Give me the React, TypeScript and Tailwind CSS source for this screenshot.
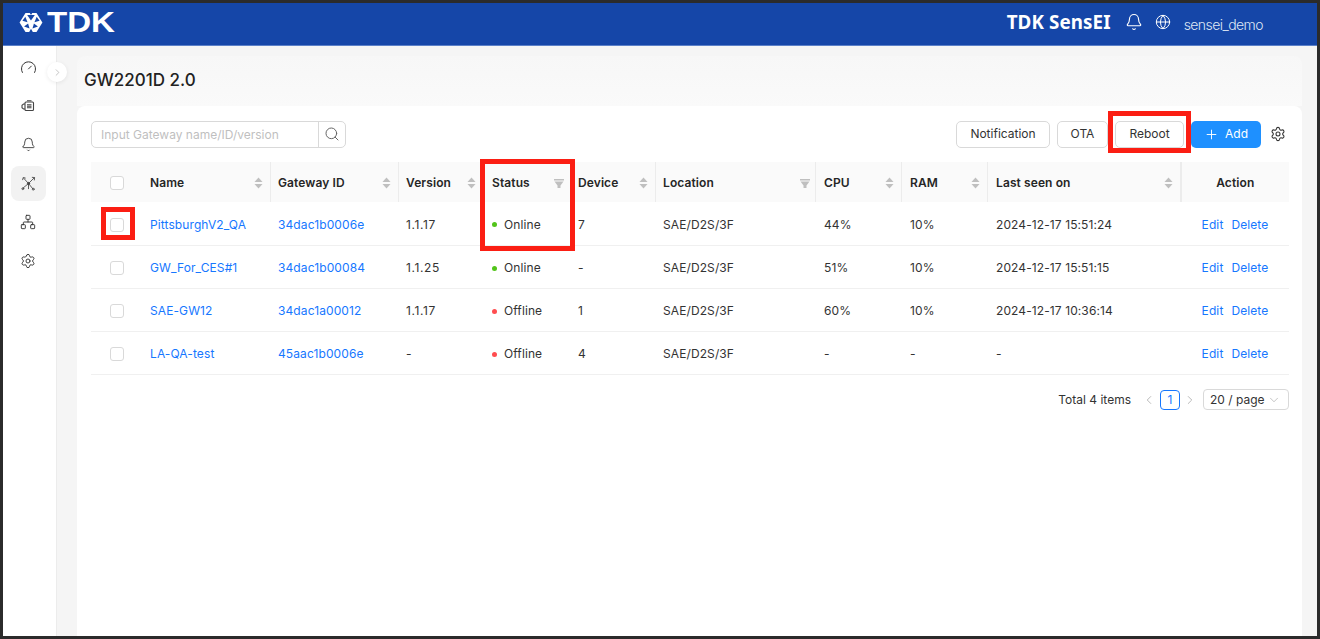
import React from "react";
import { Gauge, Bell, Globe, Settings, Network, Search, ChevronRight, ChevronLeft, ChevronDown, Plus } from "lucide-react";

const font = "font-['Inter','Noto_Sans',sans-serif]";

type Row = { name: string; id: string; ver: string; online: boolean; dev: string; cpu: string; ram: string; seen: string };
const rows: Row[] = [
  { name: "PittsburghV2_QA", id: "34dac1b0006e", ver: "1.1.17", online: true, dev: "7", cpu: "44%", ram: "10%", seen: "2024-12-17 15:51:24" },
  { name: "GW_For_CES#1", id: "34dac1b00084", ver: "1.1.25", online: true, dev: "-", cpu: "51%", ram: "10%", seen: "2024-12-17 15:51:15" },
  { name: "SAE-GW12", id: "34dac1a00012", ver: "1.1.17", online: false, dev: "1", cpu: "60%", ram: "10%", seen: "2024-12-17 10:36:14" },
  { name: "LA-QA-test", id: "45aac1b0006e", ver: "-", online: false, dev: "4", cpu: "-", ram: "-", seen: "-" },
];

function Logo() {
  return (
    <svg width="24" height="21" viewBox="0 0 26 23" className="shrink-0">
      <path d="M7 1h12l6.5 10.5L19 22H7L.5 11.5z" fill="#fff" />
      <g fill="#1546a8">
        <path d="M11.6 1h2.8L13 3.4z" />
        <path d="M8.8 3.2h8.4L13 9.2z" />
        <path d="M3.6 9.6l3.2-4.4 2.4 6z" />
        <path d="M22.4 9.6l-3.2-4.4-2.4 6z" />
        <path d="M5.4 15.8l4.4-3.2 1.6 5.4z" />
        <path d="M20.6 15.8l-4.4-3.2-1.6 5.4z" />
        <path d="M13 18.4l-2 3.6h4z" />
      </g>
    </svg>
  );
}

function EngineIcon() {
  return (
    <svg width="14" height="14" viewBox="0 0 14 14" fill="none" stroke="#444" strokeWidth="1.1">
      <rect x="4" y="3" width="8.5" height="8.5" rx="1" />
      <path d="M6 1.8h4.5M4 5H2.5L1 6.2v2.6L2.5 10H4M6 5.8h4.5M6 7.3h4.5M6 8.8h4.5" />
    </svg>
  );
}

function NodesIcon() {
  return (
    <svg width="17" height="17" viewBox="0 0 18 18" fill="none" stroke="#444" strokeWidth="0.9" strokeLinecap="round">
      <path d="M9 9L4 3.5M9 9l6-6M9 9l-6 5M9 9l4.5 5.5M9 9v5.5" />
      <path d="M13 2.5l2.5.2-.3 2.6M2.8 5l.6-2.4 2.2.6" />
      <circle cx="9" cy="9" r="1.2" fill="#444" />
      <circle cx="3" cy="14.5" r="1" />
      <circle cx="14" cy="15" r="1" />
    </svg>
  );
}

function Sorter() {
  return (
    <svg width="9" height="12" viewBox="0 0 9 12" fill="#bfbfbf" className="shrink-0">
      <path d="M4.5 0.5L8.5 5H0.5z" />
      <path d="M4.5 11.5L8.5 7H0.5z" />
    </svg>
  );
}

function FilterIcon() {
  return (
    <svg width="10" height="9" viewBox="0 0 10 9" fill="#bfbfbf" className="shrink-0 mr-[-2px]">
      <path d="M0 0h10v1.5H0z" />
      <path d="M0.5 2.5h9L6.5 6.5V9h-3V6.5z" />
    </svg>
  );
}

function Check() {
  return <span className="block w-[14px] h-[14px] rounded-[3px] border border-[#d9d9d9] bg-white" />;
}

function Head({ label, icon, sep = true, tight = false }: { label: string; icon?: "sort" | "filter"; sep?: boolean; tight?: boolean }) {
  return (
    <th className={`relative pt-[2px] font-semibold text-left text-[12px] text-[#262626] ${tight ? "pl-[7px] pr-2" : "px-2"}`}>
      <div className="flex items-center justify-between">
        <span>{label}</span>
        {icon === "sort" && <Sorter />}
        {icon === "filter" && <FilterIcon />}
      </div>
      {sep && <span className="absolute right-0 top-0 bottom-0 w-px bg-[#ececec]" />}
    </th>
  );
}

function RedBox({ cls }: { cls: string }) {
  return <div className={`absolute border-[5px] border-[#fb1e13] pointer-events-none ${cls}`} />;
}

function Btn({ children, cls }: { children: React.ReactNode; cls: string }) {
  return (
    <button className={`h-[27px] rounded-[5px] border border-[#d9d9d9] bg-white text-[12px] text-[#333] ${cls}`}>{children}</button>
  );
}

export default function App() {
  return (
    <div className={`relative w-[1320px] h-[639px] overflow-hidden bg-[#2b2b2b] p-[3px] ${font}`}>
      <div className="w-full h-full flex flex-col bg-white overflow-hidden">
        <header className="h-[43px] shrink-0 bg-[#1546a8] border-b border-[#5b80c8] flex items-center pl-[16px] pr-[54px] text-white">
          <div className="flex items-center mb-[4px]">
            <Logo />
            <span className="ml-[4px] font-['Liberation_Sans',sans-serif] font-bold text-[29px] leading-none origin-left scale-x-[1.14]">TDK</span>
          </div>
          <div className="ml-auto flex items-center pb-[4px]">
            <span className="font-['Noto_Sans',sans-serif] font-bold text-[18.8px] tracking-[0.1px]">TDK SensEI</span>
            <Bell size={18} strokeWidth={1.5} className="ml-[14px]" />
            <Globe size={16} strokeWidth={1.5} className="ml-[12px]" />
            <span className="ml-[13px] mt-[4px] text-[14px] font-light tracking-[-0.56px] text-[#dfe6f5]">sensei_demo</span>
          </div>
        </header>

        <div className="flex-1 flex min-h-0">
          <aside className="relative w-[54px] shrink-0 bg-white border-r border-[#ececec] flex flex-col items-center pt-[3px] pr-[3px] text-[#333]">
            <div className="h-[37px] flex items-center justify-center"><Gauge size={17} strokeWidth={1.4} /></div>
            <div className="h-[39px] flex items-center justify-center"><EngineIcon /></div>
            <div className="h-[38px] flex items-center justify-center"><Bell size={15} strokeWidth={1.4} /></div>
            <div className="mt-[3px] w-[35px] h-[35px] rounded-[8px] bg-[#f2f2f2] flex items-center justify-center"><NodesIcon /></div>
            <div className="h-[41px] flex items-center justify-center"><Network size={16} strokeWidth={1.4} /></div>
            <div className="h-[37px] flex items-center justify-center"><Settings size={16} strokeWidth={1.4} /></div>
            <div className="absolute left-[44px] top-[16px] w-[20px] h-[20px] rounded-full bg-white shadow-[0_1px_4px_rgba(0,0,0,0.08)] flex items-center justify-center text-[#aaa] z-10">
              <ChevronRight size={11} strokeWidth={1.5} />
            </div>
          </aside>

          <main className="flex-1 min-w-0 bg-[#f5f5f5] pl-[20px] pr-[15px] pt-[10px] flex flex-col">
            <div className="h-[50px] shrink-0 bg-gradient-to-b from-[#f7f7f7] to-[#fafafa] pl-[7px] pt-[11px] rounded-t-[8px] text-[17px] leading-[26px] font-medium text-[#222]">
              GW2201D 2.0
            </div>
            <section className="flex-1 bg-white rounded-t-[8px] pl-[14px] pr-[13px] pt-[14px] flex flex-col min-h-0">
              <div className="flex items-center h-[28px]">
                <div className="flex h-[27px] w-[255px] border border-[#d9d9d9] rounded-[5px]">
                  <span className="flex-1 pl-[9px] text-[12px] leading-[25px] text-[#bfbfbf]">Input Gateway name/ID/version</span>
                  <span className="w-[27px] border-l border-[#d9d9d9] flex items-center justify-center text-[#666]">
                    <Search size={16} strokeWidth={1.5} />
                  </span>
                </div>
                <div className="ml-auto flex items-center">
                  <Btn cls="w-[94px]">Notification</Btn>
                  <Btn cls="w-[51px] ml-[7px]">OTA</Btn>
                  <Btn cls="w-[69px] ml-[7px]">Reboot</Btn>
                  <button className="ml-[7px] h-[27px] w-[70px] rounded-[5px] bg-[#1e90ff] text-white text-[12px] flex items-center justify-center gap-[6px]">
                    <Plus size={15} strokeWidth={1.5} />Add
                  </button>
                  <Settings size={16} strokeWidth={1.6} className="ml-[9px] mr-[3px] text-[#333]" />
                </div>
              </div>

              <table className="mt-[14px] w-[1198px] table-fixed border-collapse text-[12px] tracking-[0.1px] text-[#333]">
                <colgroup>
                  <col className="w-[51px]" />
                  <col className="w-[129px]" />
                  <col className="w-[128px]" />
                  <col className="w-[85px]" />
                  <col className="w-[86px]" />
                  <col className="w-[86px]" />
                  <col className="w-[160px]" />
                  <col className="w-[86px]" />
                  <col className="w-[86px]" />
                  <col className="w-[193px]" />
                  <col className="w-[108px]" />
                </colgroup>
                <thead>
                  <tr className="h-[40px] bg-[#fafafa]">
                    <th className="pl-[19px] pt-[2px]"><Check /></th>
                    <Head label="Name" icon="sort" />
                    <Head label="Gateway ID" icon="sort" tight />
                    <Head label="Version" icon="sort" tight />
                    <Head label="Status" icon="filter" sep={false} />
                    <Head label="Device" icon="sort" />
                    <Head label="Location" icon="filter" tight />
                    <Head label="CPU" icon="sort" />
                    <Head label="RAM" icon="sort" />
                    <Head label="Last seen on" icon="sort" />
                    <th className="pt-[2px] text-center font-semibold text-[12px] text-[#262626] border-l border-[#ececec]">Action</th>
                  </tr>
                </thead>
                <tbody>
                  {rows.map((r) => (
                    <tr key={r.name} className="h-[43px] border-b border-[#f0f0f0]">
                      <td className="pl-[19px] pt-[3px]"><Check /></td>
                      <td className="px-2 pt-[3px] text-[#1677ff]">{r.name}</td>
                      <td className="pl-[7px] pr-2 pt-[3px] text-[#1677ff]">{r.id}</td>
                      <td className="pl-[7px] pr-2 pt-[3px] tracking-[0.6px]">{r.ver}</td>
                      <td className="px-2 pt-[3px]">
                        <span className="flex items-center gap-[7px]">
                          <span className={`w-[5px] h-[5px] rounded-full ${r.online ? "bg-[#52c41a]" : "bg-[#ff4d4f]"}`} />
                          {r.online ? "Online" : "Offline"}
                        </span>
                      </td>
                      <td className="px-2 pt-[3px]">{r.dev}</td>
                      <td className="pl-[7px] pr-2 pt-[3px]">SAE/D2S/3F</td>
                      <td className="px-2 pt-[3px]">{r.cpu}</td>
                      <td className="px-2 pt-[3px]">{r.ram}</td>
                      <td className="px-2 pt-[3px]">{r.seen}</td>
                      <td className="pt-[3px] text-center text-[#1677ff]">
                        <span>Edit</span><span className="ml-[8px]">Delete</span>
                      </td>
                    </tr>
                  ))}
                </tbody>
              </table>

              <div className="mt-[14px] flex items-center justify-end h-[22px] text-[12px] text-[#333]">
                <span>Total 4 items</span>
                <ChevronLeft size={14} strokeWidth={1.4} className="ml-[11px] text-[#aaa]" />
                <span className="ml-[4px] w-[20px] h-[20px] rounded-[4px] border border-[#1677ff] text-[#1677ff] flex items-center justify-center">1</span>
                <ChevronRight size={14} strokeWidth={1.4} className="ml-[3px] text-[#aaa]" />
                <span className="ml-[6px] w-[86px] h-[21px] rounded-[4px] border border-[#d9d9d9] flex items-center justify-between pl-[6px] pr-[7px]">
                  20 / page <ChevronDown size={14} strokeWidth={1.2} className="text-[#aaa]" />
                </span>
              </div>
            </section>
          </main>
        </div>
      </div>

      <RedBox cls="left-[101px] top-[207px] w-[34px] h-[33px]" />
      <RedBox cls="left-[480px] top-[159px] w-[95px] h-[92px]" />
      <RedBox cls="left-[1108px] top-[111px] w-[83px] h-[42px]" />
    </div>
  );
}
